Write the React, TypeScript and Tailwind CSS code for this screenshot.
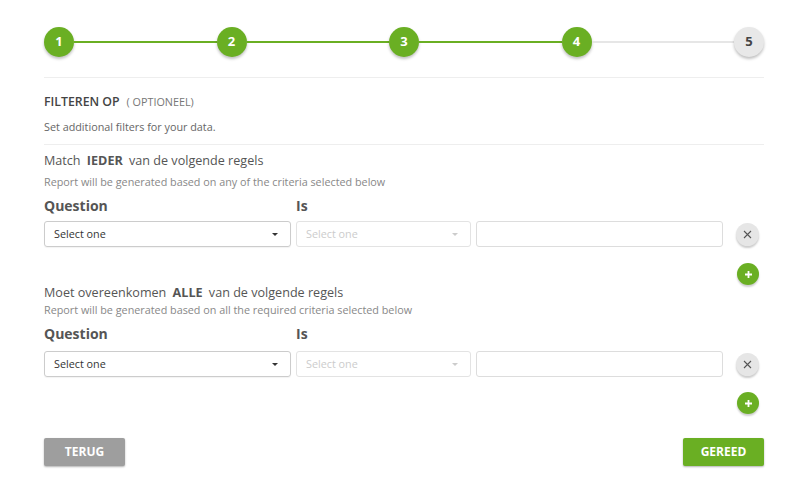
function Step({ n, done }: { n: number; done: boolean }) {
  return (
    <div
      className={
        done
          ? "w-[30px] h-[30px] rounded-full bg-[#6aaf23] text-white flex items-center justify-center text-[13px] font-bold shadow-[0_2px_3px_rgba(0,0,0,0.25)] shrink-0"
          : "w-[30px] h-[30px] rounded-full bg-[#e8e8e8] text-[#444] flex items-center justify-center text-[13px] font-bold shadow-[0_2px_3px_rgba(0,0,0,0.25)] shrink-0"
      }
    >
      {n}
    </div>
  );
}

function Caret({ light }: { light?: boolean }) {
  return (
    <span
      className={
        light
          ? "w-0 h-0 border-l-[3px] border-r-[3px] border-t-[3px] border-l-transparent border-r-transparent border-t-[#ccc]"
          : "w-0 h-0 border-l-[3px] border-r-[3px] border-t-[3px] border-l-transparent border-r-transparent border-t-[#333]"
      }
    />
  );
}

function RuleRow({ second }: { second?: boolean }) {
  return (
    <>
      <div className="flex mt-[7px] text-[14px] font-bold text-[#555] leading-[20px]">
        <div className="w-[252px]">Question</div>
        <div>Is</div>
      </div>
      <div className={second ? "flex items-center mt-[7px]" : "flex items-center mt-[5px]"}>
        <div className="w-[247px] h-[26px] border border-[#ccc] rounded-[3px] flex items-center justify-between pl-[9px] pr-[12px] text-[10.8px] text-[#333] shadow-[0_1px_1px_rgba(0,0,0,0.05)]">
          <span>Select one</span>
          <Caret />
        </div>
        <div className="ml-[5px] w-[175px] h-[26px] border border-[#e3e3e3] rounded-[3px] flex items-center justify-between pl-[9px] pr-[12px] text-[10.8px] text-[#ccc]">
          <span>Select one</span>
          <Caret light />
        </div>
        <div className="ml-[5px] w-[247px] h-[26px] border border-[#ddd] rounded-[3px]" />
        <div className="ml-[13px] w-[23px] h-[23px] rounded-full bg-[#e6e6e6] shadow-[0_2px_2px_rgba(0,0,0,0.2)] flex items-center justify-center">
          <svg width="9" height="9" viewBox="0 0 9 9">
            <path d="M1 1L8 8M8 1L1 8" stroke="#555" strokeWidth="1.1" />
          </svg>
        </div>
      </div>
      <div className={second ? "flex justify-end pr-[5px] mt-[15px]" : "flex justify-end pr-[5px] mt-[16px]"}>
        <div className="w-[22px] h-[22px] rounded-full bg-[#6aaf23] shadow-[0_2px_2px_rgba(0,0,0,0.2)] flex items-center justify-center">
          <svg width="9" height="9" viewBox="0 0 9 9">
            <path d="M4.5 1V8M1 4.5H8" stroke="#fff" strokeWidth="1.8" />
          </svg>
        </div>
      </div>
    </>
  );
}

export default function App() {
  return (
    <div className="w-[806px] h-[489px] bg-white font-['Open_Sans',sans-serif]">
      <div className="ml-[44px] w-[720px] pt-[27px]">
        <div className="flex items-center">
          <Step n={1} done />
          <div className="flex-1 h-[2px] bg-[#6aaf23]" />
          <Step n={2} done />
          <div className="flex-1 h-[2px] bg-[#6aaf23]" />
          <Step n={3} done />
          <div className="flex-1 h-[2px] bg-[#6aaf23]" />
          <Step n={4} done />
          <div className="flex-1 h-[2px] bg-[#e6e6e6]" />
          <Step n={5} done={false} />
        </div>

        <div className="mt-[20px] border-t border-[#eee]" />

        <div className="mt-[16px] flex items-baseline leading-[16px]">
          <span className="text-[12.3px] font-semibold text-[#444]">FILTEREN OP</span>
          <span className="ml-[7px] text-[10.8px] text-[#777]">( OPTIONEEL)</span>
        </div>
        <div className="mt-[10px] text-[10.8px] text-[#666] leading-[14px]">Set additional filters for your data.</div>

        <div className="mt-[10px] border-t border-[#eee]" />

        <div className="mt-[7px] text-[12.6px] text-[#555] leading-[18px]">
          Match <span className="font-bold ml-[3px] mr-[3px]">IEDER</span> van de volgende regels
        </div>
        <div className="mt-[5px] text-[10.8px] text-[#888] leading-[14px]">
          Report will be generated based on any of the criteria selected below
        </div>
        <RuleRow />

        <div className="mt-[-1px] text-[12.6px] text-[#555] leading-[18px]">
          Moet overeenkomen <span className="font-bold ml-[3px] mr-[3px]">ALLE</span> van de volgende regels
        </div>
        <div className="mt-[1px] text-[10.8px] text-[#888] leading-[14px]">
          Report will be generated based on all the required criteria selected below
        </div>
        <RuleRow second />

        <div className="mt-[24px] flex justify-between">
          <button className="w-[81px] h-[28px] rounded-[2px] bg-[#9e9e9e] text-white text-[12px] font-bold shadow-[0_1px_2px_rgba(0,0,0,0.3)]">
            TERUG
          </button>
          <button className="w-[81px] h-[28px] rounded-[2px] bg-[#6aaf23] text-white text-[12px] font-bold shadow-[0_1px_2px_rgba(0,0,0,0.3)]">
            GEREED
          </button>
        </div>
      </div>
    </div>
  );
}
